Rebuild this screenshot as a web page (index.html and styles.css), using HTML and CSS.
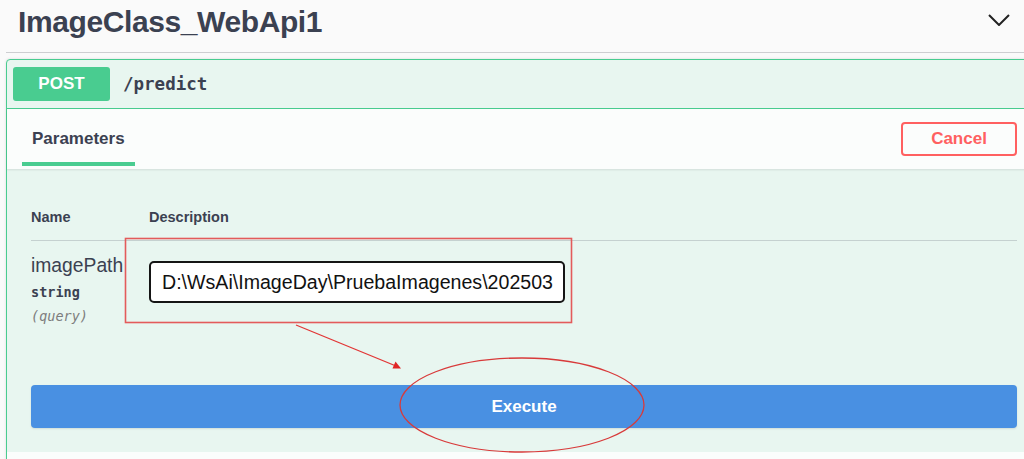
FILE: index.html
```html
<!DOCTYPE html>
<html lang="en">
<head>
<meta charset="utf-8">
<title>ImageClass_WebApi1</title>
<link rel="stylesheet" href="styles.css">
</head>
<body>
<div class="page">
  <header class="api-header">
    <h2 class="api-title">ImageClass_WebApi1</h2>
    <svg class="chevron" viewBox="0 0 22 12" aria-hidden="true"><polyline points="1,1 11,11 21,1" /></svg>
  </header>
  <section class="opblock">
    <div class="summary">
      <span class="method">POST</span>
      <span class="path">/predict</span>
    </div>
    <div class="tab-header">
      <div class="tab-item"><h4>Parameters</h4></div>
      <button class="btn-cancel">Cancel</button>
    </div>
    <div class="params">
      <div class="param-head">
        <div class="col-name">Name</div>
        <div class="col-desc-head">Description</div>
      </div>
      <div class="param-row">
        <div class="col-name">
          <div class="pname">imagePath</div>
          <div class="ptype">string</div>
          <div class="pin">(query)</div>
        </div>
        <div class="col-desc">
          <input class="pinput" type="text" value="D:\WsAi\ImageDay\PruebaImagenes\202503">
        </div>
      </div>
    </div>
    <div class="execute-wrap">
      <button class="btn-execute">Execute</button>
    </div>
    <div class="responses"></div>
  </section>
  <svg class="annotations" viewBox="0 0 1024 459" aria-hidden="true">
    <rect class="ann-rect" x="125.5" y="238.5" width="446" height="84" />
    <line class="ann-arrow" x1="296" y1="325" x2="396" y2="366" />
    <polygon class="ann-head" points="401,368.5 392.5,368.5 395.5,361.5" />
    <ellipse class="ann-ellipse" cx="522" cy="405" rx="122" ry="47" />
  </svg>
</div>
</body>
</html>
```

FILE: styles.css
```css
html, body {
  margin: 0;
  padding: 0;
  overflow: hidden;
  background: #fafafa;
}

body {
  font-family: "Liberation Sans", Arial, sans-serif;
  color: #3b4151;
}

.page {
  position: relative;
  width: 1042px;
  height: 459px;
  padding-left: 6px;
  box-sizing: border-box;
  overflow: hidden;
}

.api-header {
  display: flex;
  justify-content: space-between;
  align-items: flex-start;
  height: 52px;
  border-bottom: 1px solid #cdced1;
}

.api-title {
  margin: 0;
  padding: 4px 0 0 12px;
  font-size: 30px;
  line-height: 36px;
  font-weight: 700;
  letter-spacing: -0.4px;
  color: #3b4151;
}

.chevron {
  width: 22px;
  height: 12px;
  margin: 14px 32px 0 0;
  fill: none;
  stroke: #222;
  stroke-width: 2;
}

.opblock {
  margin-top: 6px;
  border: 1px solid #49cc90;
  border-radius: 4px;
  background: #e8f6f0;
  box-shadow: 0 0 3px rgba(0, 0, 0, 0.12);
}

.summary {
  display: flex;
  align-items: center;
  padding: 7px 6px;
  border-bottom: 1px solid #49cc90;
}

.method {
  display: flex;
  align-items: center;
  justify-content: center;
  width: 97px;
  height: 34px;
  background: #49cc90;
  color: #fff;
  border-radius: 3px;
  font-size: 17px;
  font-weight: 700;
}

.path {
  margin-left: 13px;
  font-family: "DejaVu Sans Mono", "Liberation Mono", monospace;
  font-weight: 700;
  font-size: 17.5px;
  color: #3b4151;
}

.tab-header {
  display: flex;
  align-items: center;
  justify-content: space-between;
  height: 60px;
  padding: 0 24px 0 15px;
  background: rgba(255, 255, 255, 0.8);
  box-shadow: 0 1px 2px rgba(0, 0, 0, 0.1);
}

.tab-item {
  position: relative;
  align-self: stretch;
  padding: 20px 10px 0;
  box-sizing: border-box;
}

.tab-item h4 {
  margin: 0;
  font-size: 17px;
  line-height: 20px;
  font-weight: 700;
  color: #3b4151;
}

.tab-item::after {
  content: "";
  position: absolute;
  left: 0;
  right: 0;
  top: 53px;
  height: 4px;
  background: #49cc90;
}

.btn-cancel {
  width: 116px;
  height: 34px;
  border: 2px solid #ff6060;
  border-radius: 4px;
  background: transparent;
  color: #ff6060;
  font-family: "Liberation Sans", Arial, sans-serif;
  font-size: 17px;
  font-weight: 700;
  padding: 0;
}

.params {
  padding: 0 24px;
}

.param-head {
  display: flex;
  padding: 40px 0 14px;
  border-bottom: 1px solid rgba(59, 65, 81, 0.2);
  font-size: 14.5px;
  line-height: 17px;
  font-weight: 700;
}

.col-name {
  flex: none;
  width: 118px;
}

.param-row {
  display: flex;
}

.pname {
  padding-top: 14px;
  font-size: 19.3px;
  line-height: 22px;
  color: #3b4151;
}

.ptype {
  margin-top: 4px;
  font-family: "DejaVu Sans Mono", "Liberation Mono", monospace;
  font-weight: 700;
  font-size: 13.5px;
  line-height: 22px;
}

.pin {
  margin-top: 2px;
  font-family: "DejaVu Sans Mono", "Liberation Mono", monospace;
  font-style: italic;
  font-size: 13.5px;
  line-height: 22px;
  color: #7d7d7d;
}

.col-desc {
  padding-top: 20px;
}

.pinput {
  display: block;
  width: 416px;
  height: 42px;
  box-sizing: border-box;
  border: 2px solid #151515;
  border-radius: 5px;
  padding: 0 6px 0 11px;
  background: #fff;
  color: #111;
  font-family: "Liberation Sans", Arial, sans-serif;
  font-size: 19.6px;
  outline: none;
}

.execute-wrap {
  padding: 58px 24px 24px;
}

.btn-execute {
  display: block;
  width: 100%;
  height: 43px;
  border: none;
  border-radius: 4px;
  background: #4990e2;
  color: #fff;
  font-family: "Liberation Sans", Arial, sans-serif;
  font-size: 17px;
  font-weight: 700;
  box-shadow: 0 1px 2px rgba(0, 0, 0, 0.1);
}

.responses {
  height: 20px;
  background: rgba(255, 255, 255, 0.8);
}

.annotations {
  position: absolute;
  top: 0;
  left: 0;
  width: 1024px;
  height: 459px;
  pointer-events: none;
}

.ann-rect {
  fill: none;
  stroke: #e35b5b;
  stroke-width: 1.6;
}

.ann-arrow {
  stroke: #e23535;
  stroke-width: 1.3;
}

.ann-head {
  fill: #e02525;
}

.ann-ellipse {
  fill: none;
  stroke: #d83a3a;
  stroke-width: 1.3;
}
```
